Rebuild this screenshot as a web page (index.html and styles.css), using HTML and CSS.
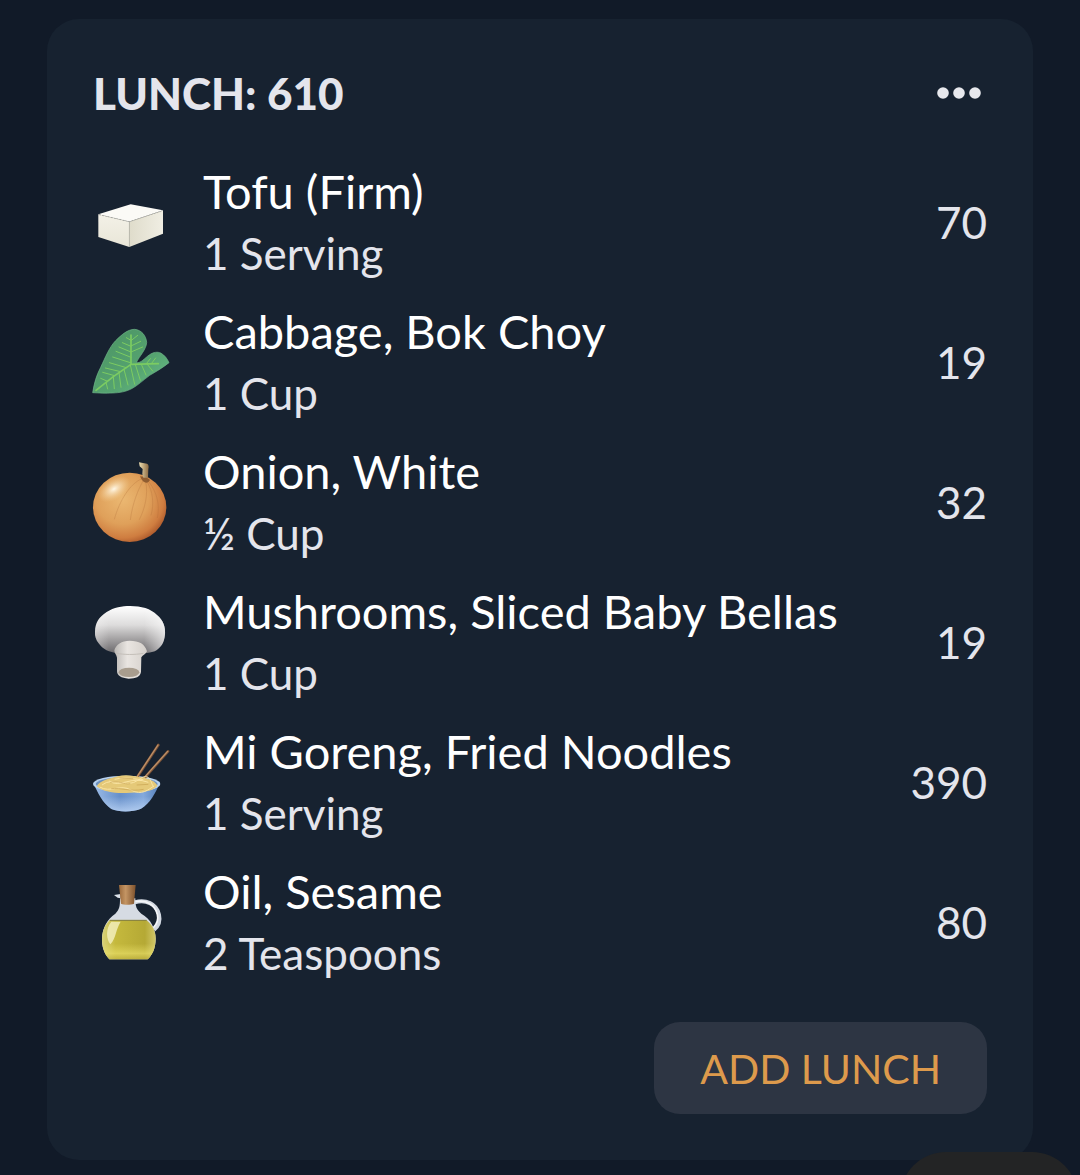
FILE: index.html
```
<!DOCTYPE html>
<html lang="en">

<head>
    <meta charset="UTF-8">
    <meta name="viewport" content="width=device-width, initial-scale=1.0">
    <title>Lunch</title>
    <link rel="stylesheet" href="styles.css">
</head>

<body>
    <main class="card">
        <header class="card-header">
            <h1 class="title">LUNCH: 610</h1>
            <button type="button" class="more" aria-label="More options">
                <svg viewBox="0 0 44 12" class="dots">
                    <circle cx="6" cy="6" r="5.8"/>
                    <circle cx="22" cy="6" r="5.8"/>
                    <circle cx="38" cy="6" r="5.8"/>
                </svg>
            </button>
        </header>
        <ul class="foods">
            <li class="food">
                <!-- tofu -->
                <svg class="icon" viewBox="39 3 240 240" aria-hidden="true">
                    <defs>
                        <linearGradient id="tofuLeft" x1="0" y1="0" x2="0" y2="1">
                            <stop offset="0" stop-color="#f3f1e7"/>
                            <stop offset="1" stop-color="#e9e6d8"/>
                        </linearGradient>
                        <linearGradient id="tofuRight" x1="0" y1="0" x2="1" y2="0">
                            <stop offset="0" stop-color="#dfdccb"/>
                            <stop offset="1" stop-color="#f0eee3"/>
                        </linearGradient>
                    </defs>
                    <path d="M55 100L148 122V198L55 168Z" fill="url(#tofuLeft)"/>
                    <path d="M148 122L249 88V158L148 198Z" fill="url(#tofuRight)"/>
                    <path d="M55 100L152 70L249 88L148 122Z" fill="#fbfaf6"/>
                    <path d="M57 101L148 122L247 90" fill="none" stroke="#8d8b7f" stroke-width="1.5" stroke-dasharray="6 3"/>
                    <path d="M148 123V196" stroke="#c5c3b5" stroke-width="1.5"/>
                </svg>
                <div class="info">
                    <h2 class="name">Tofu (Firm)</h2>
                    <p class="amount">1 Serving</p>
                </div>
                <span class="calories">70</span>
            </li>
            <li class="food">
                <!-- leaf -->
                <svg class="icon" viewBox="39 33 240 240" aria-hidden="true">
                    <defs>
                        <linearGradient id="leaf" x1="0" y1="0" x2="1" y2="1">
                            <stop offset="0" stop-color="#4b9263"/>
                            <stop offset="0.6" stop-color="#55a370"/>
                            <stop offset="1" stop-color="#6ac08a"/>
                        </linearGradient>
                    </defs>
                    <path d="M38 245C43 215 49 194 62 169C76 139 88 109 106 90C125 71 143 55 164 55C185 57 198 74 200 94C199 116 178 135 169 155C183 157 193 142 209 131C221 123 233 122 242 126C255 133 262 144 267 155C251 168 230 181 209 193C188 209 173 223 157 232C136 243 119 245 98 246C77 247 56 246 38 245Z" fill="url(#leaf)" stroke="#6fb78a" stroke-width="2"/>
                    <g fill="none" stroke="#7ccc62" stroke-linecap="round" stroke-width="3">
                        <path d="M153 160L153 72M153 160L235 158M153 160L100 197L48 238" stroke-width="5"/>
                        <path d="M153 88L139 80M153 106L127 95M153 123L117 108M153 139L108 121M151 155L98 138M139 170L88 155M122 182L76 171M104 194L68 184M83 211L62 202M153 89L173 73M153 105L182 91M153 123L188 108M151 162L164 220M132 175L144 222M117 185L123 229M100 197L103 233M78 214L83 234M166 160L181 208M184 160L198 192M202 160L218 180M199 158L211 143M214 158L227 141"/>
                    </g>
                </svg>
                <div class="info">
                    <h2 class="name">Cabbage, Bok Choy</h2>
                    <p class="amount">1 Cup</p>
                </div>
                <span class="calories">19</span>
            </li>
            <li class="food">
                <!-- onion -->
                <svg class="icon" viewBox="39 33 240 240" aria-hidden="true">
                    <defs>
                        <radialGradient id="onion" cx="0.4" cy="0.38" r="0.66">
                            <stop offset="0" stop-color="#ebb872"/>
                            <stop offset="0.55" stop-color="#dfa05a"/>
                            <stop offset="0.85" stop-color="#cf7d40"/>
                            <stop offset="1" stop-color="#ad5a2c"/>
                        </radialGradient>
                        <radialGradient id="onionShine">
                            <stop offset="0" stop-color="#fff8e8"/>
                            <stop offset="1" stop-color="#f4cf91" stop-opacity="0"/>
                        </radialGradient>
                        <linearGradient id="onionStem" x1="0" x2="1">
                            <stop offset="0" stop-color="#eee0b2"/>
                            <stop offset="1" stop-color="#8c6b43"/>
                        </linearGradient>
                    </defs>
                    <ellipse cx="149" cy="169" rx="110" ry="104" fill="url(#onion)"/>
                    <ellipse cx="102" cy="114" rx="54" ry="32" fill="url(#onionShine)" transform="rotate(-32 102 114)"/>
                    <g fill="none" stroke="#ad6936" stroke-width="2" opacity="0.4">
                        <path d="M184 84C151 98 119 147 103 205"/>
                        <path d="M191 87C175 113 157 158 151 207"/>
                        <path d="M197 92C205 130 195 172 178 206"/>
                        <path d="M207 93C232 126 240 163 232 201"/>
                        <path d="M202 94C218 120 223 158 213 193"/>
                    </g>
                    <path d="M180 76C190 101 205 98 210 87L198 78Z" fill="#714623" opacity="0.7"/>
                    <path d="M177 34L201 38C206 40 207 46 205 54L204 80L190 80L187 69L188 54L179 46Z" fill="url(#onionStem)"/>
                </svg>
                <div class="info">
                    <h2 class="name">Onion, White</h2>
                    <p class="amount">½ Cup</p>
                </div>
                <span class="calories">32</span>
            </li>
            <li class="food">
                <!-- mushroom -->
                <svg class="icon" viewBox="39 36 240 240" aria-hidden="true">
                    <defs>
                        <linearGradient id="cap" x1="0" y1="0" x2="0" y2="1">
                            <stop offset="0" stop-color="#ffffff"/>
                            <stop offset="0.4" stop-color="#dddcdc"/>
                            <stop offset="0.7" stop-color="#a3a1a2"/>
                            <stop offset="1" stop-color="#6b696c"/>
                        </linearGradient>
                        <linearGradient id="capEdge" x1="0" x2="1">
                            <stop offset="0" stop-color="#ffffff" stop-opacity="0.3"/>
                            <stop offset="0.2" stop-color="#ffffff" stop-opacity="0"/>
                            <stop offset="0.7" stop-color="#ffffff" stop-opacity="0"/>
                            <stop offset="1" stop-color="#ffffff" stop-opacity="0.6"/>
                        </linearGradient>
                        <linearGradient id="stalk" x1="0" x2="1">
                            <stop offset="0" stop-color="#bbb8b5"/>
                            <stop offset="0.4" stop-color="#e9e5e1"/>
                            <stop offset="1" stop-color="#d5d0cb"/>
                        </linearGradient>
                    </defs>
                    <path d="M45 125C46 98 57 81 80 66C102 52 126 48 150 48C184 48 212 56 231 75C250 91 257 112 255 133C253 158 243 174 224 184C205 191 184 190 166 190H113C88 187 68 178 56 160C48 149 44 138 45 125Z" fill="url(#cap)"/>
                    <path d="M45 125C46 98 57 81 80 66C102 52 126 48 150 48C184 48 212 56 231 75C250 91 257 112 255 133C253 158 243 174 224 184C205 191 184 190 166 190H113C88 187 68 178 56 160C48 149 44 138 45 125Z" fill="url(#capEdge)"/>
                    <path d="M103 181C108 163 124 153 149 152C178 152 195 162 201 184C198 192 188 195 184 202L183 246C180 261 168 266 146 266C123 265 111 256 111 244V203C110 194 103 191 103 181Z" fill="url(#stalk)"/>
                    <path d="M110 190C130 194 165 195 190 190" fill="none" stroke="#c4bfb9" stroke-width="3"/>
                    <ellipse cx="147" cy="247" rx="31" ry="14" fill="#a89d8e"/>
                </svg>
                <div class="info">
                    <h2 class="name">Mushrooms, Sliced Baby Bellas</h2>
                    <p class="amount">1 Cup</p>
                </div>
                <span class="calories">19</span>
            </li>
            <li class="food">
                <!-- noodle bowl -->
                <svg class="icon" viewBox="39 36 240 240" aria-hidden="true">
                    <defs>
                        <linearGradient id="bowl" x1="0" x2="1">
                            <stop offset="0" stop-color="#9dbde7"/>
                            <stop offset="0.4" stop-color="#668fc9"/>
                            <stop offset="0.75" stop-color="#83a9dc"/>
                            <stop offset="1" stop-color="#537eb9"/>
                        </linearGradient>
                        <linearGradient id="bowlLight" x1="0" y1="0" x2="0" y2="1">
                            <stop offset="0.5" stop-color="#bdd5f5" stop-opacity="0"/>
                            <stop offset="1" stop-color="#bdd5f5" stop-opacity="0.8"/>
                        </linearGradient>
                    </defs>
                    <path d="M40 160C52 185 68 221 94 237C116 247 158 247 183 236C210 220 229 187 240 155Z" fill="url(#bowl)"/>
                    <path d="M40 160C52 185 68 221 94 237C116 247 158 247 183 236C210 220 229 187 240 155Z" fill="url(#bowlLight)"/>
                    <ellipse cx="140" cy="162" rx="101" ry="25" fill="#b8d2ef"/>
                    <ellipse cx="140" cy="162" rx="93" ry="20" fill="#6d91bf"/>
                    <g stroke-linecap="round">
                        <path d="M235 45L168 147M264 64L190 148" stroke="#795035" stroke-width="8"/>
                        <path d="M234 45L168 145M263 64L190 146" stroke="#bd9068" stroke-width="4"/>
                    </g>
                    <path d="M50 169C61 149 95 145 113 139C137 132 159 137 183 142C208 146 228 155 232 168C215 187 181 187 151 188C119 191 73 189 50 169Z" fill="#e5c978"/>
                    <g fill="none" stroke="#fae5a5" stroke-width="3">
                        <path d="M66 165C101 137 138 178 175 150S212 161 220 169M59 171C91 190 121 161 153 180S207 177 222 168M88 153C118 176 153 136 205 157M104 148C143 139 166 149 190 149"/>
                    </g>
                    <path d="M91 157C114 149 131 165 151 161M119 144L160 146M94 176C121 172 151 186 191 178M170 165L205 163" fill="none" stroke="#c9a351" stroke-width="2"/>
                </svg>
                <div class="info">
                    <h2 class="name">Mi Goreng, Fried Noodles</h2>
                    <p class="amount">1 Serving</p>
                </div>
                <span class="calories">390</span>
            </li>
            <li class="food">
                <!-- oil bottle -->
                <svg class="icon" viewBox="39 39 240 240" aria-hidden="true">
                    <defs>
                        <linearGradient id="oil" x1="0" x2="1">
                            <stop offset="0" stop-color="#d9d27a"/>
                            <stop offset="0.25" stop-color="#c5b93d"/>
                            <stop offset="0.8" stop-color="#b5a935"/>
                            <stop offset="1" stop-color="#d2c86b"/>
                        </linearGradient>
                        <linearGradient id="oilLight" x1="0" y1="0" x2="0" y2="1">
                            <stop offset="0.6" stop-color="#ece26c" stop-opacity="0"/>
                            <stop offset="0.85" stop-color="#ece26c" stop-opacity="0.6"/>
                            <stop offset="1" stop-color="#c1b345" stop-opacity="0.5"/>
                        </linearGradient>
                        <linearGradient id="cork" x1="0" x2="1">
                            <stop offset="0" stop-color="#9a693b"/>
                            <stop offset="0.4" stop-color="#c49564"/>
                            <stop offset="1" stop-color="#7d512c"/>
                        </linearGradient>
                    </defs>
                    <path d="M164 100C197 91 229 103 237 137C242 158 234 172 222 182" fill="none" stroke="#d3d9e2" stroke-width="12"/>
                    <path d="M165 98C199 92 225 106 232 136C237 156 229 167 219 177" fill="none" stroke="#f4f6f9" stroke-width="5"/>
                    <path d="M102 78L122 75V88L113 86Z" fill="#dce2e9"/>
                    <path d="M120 88H166C166 113 169 121 184 134C213 151 226 177 227 209C227 239 216 258 203 271H88C72 253 65 232 66 207C68 177 81 151 106 134C119 121 120 111 120 88Z" fill="#d6dbe3"/>
                    <path d="M89 154H200C218 169 227 187 227 209C227 239 216 258 203 271H88C72 253 65 232 66 207C67 184 75 168 89 154Z" fill="url(#oil)"/>
                    <path d="M89 154H200C218 169 227 187 227 209C227 239 216 258 203 271H88C72 253 65 232 66 207C67 184 75 168 89 154Z" fill="url(#oilLight)"/>
                    <path d="M89 154H200" stroke="#817b3a" stroke-width="3"/>
                    <path d="M94 158H122C107 181 109 207 91 226C79 211 76 179 94 158Z" fill="#f2edbb" opacity="0.85"/>
                    <path d="M117 48H167L162 104C151 108 132 108 123 104Z" fill="url(#cork)"/>
                </svg>
                <div class="info">
                    <h2 class="name">Oil, Sesame</h2>
                    <p class="amount">2 Teaspoons</p>
                </div>
                <span class="calories">80</span>
            </li>
        </ul>
        <footer class="card-footer">
            <button type="button" class="add">ADD LUNCH</button>
        </footer>
    </main>
    <div class="floating"></div>
</body>

</html>
```

FILE: styles.css
```
*{
    margin: 0;
    padding: 0;
    box-sizing: border-box;
}
body{
    padding: 19px 47px 15px;
    min-height: 100vh;
    background: #111a28;
    color: #e4e5ec;
    font-family: Lato, "Liberation Sans", sans-serif;
    font-size: 44px;
}
.card{
    padding: 46px;
    background: #172230;
    border-radius: 32px;
}
.card-header{
    display: flex;
    align-items: center;
    justify-content: space-between;
    height: 56px;
    margin-bottom: 39px;
}
.title{
    font-size: 44px;
    font-weight: 900;
}
.more{
    padding: 16px 6px;
    border: none;
    background: none;
    cursor: pointer;
}
.dots{
    display: block;
    width: 44px;
    height: 12px;
    fill: #e8e9ed;
}
.foods{
    display: flex;
    flex-direction: column;
    gap: 16px;
    list-style: none;
}
.food{
    display: flex;
    align-items: center;
}
.icon{
    flex: none;
    width: 80px;
    height: 80px;
    margin-right: 30px;
    overflow: visible;
}
.info{
    flex: 1;
    line-height: 62px;
}
.name{
    color: #fff;
    font-size: 47px;
    font-weight: normal;
}
.card-footer{
    display: flex;
    justify-content: flex-end;
    margin-top: 38px;
}
.add{
    padding: 0 46px;
    height: 92px;
    border: none;
    border-radius: 26px;
    background: #2d3543;
    color: #dd9a4c;
    font-family: inherit;
    font-size: 41px;
    cursor: pointer;
}
/* floating button peeking in from the bottom */
.floating{
    position: fixed;
    right: 2px;
    bottom: -69px;
    width: 178px;
    height: 92px;
    border-radius: 46px;
    background: #232425;
}
```
